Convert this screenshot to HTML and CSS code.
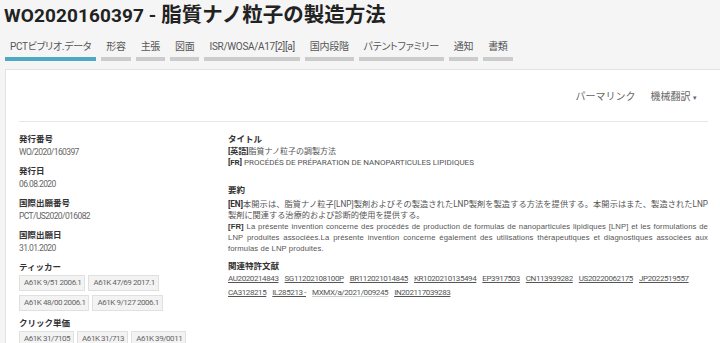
FILE: index.html
```html
<!DOCTYPE html>
<html lang="ja">
  <head>
    <meta charset="UTF-8" />
    <meta name="viewport" content="width=device-width, initial-scale=1.0" />
    <title>WO2020160397 - 脂質ナノ粒子の製造方法</title>
    <link rel="stylesheet" href="styles.css">
  </head>
  <body>
    <h1><span class="pub-no">WO2020160397 - </span>脂質ナノ粒子の製造方法</h1>

    <div class="tabs">
      <span class="tab active">PCTビブリオ.データ</span>
      <span class="tab">形容</span>
      <span class="tab">主張</span>
      <span class="tab">図面</span>
      <span class="tab">ISR/WOSA/A17[2][a]</span>
      <span class="tab">国内段階</span>
      <span class="tab">パテントファミリー</span>
      <span class="tab">通知</span>
      <span class="tab">書類</span>
    </div>

    <div class="panel">
      <div class="toolbar">
        <span>パーマリンク</span>
        <span>機械翻訳 <span class="caret">▾</span></span>
      </div>

      <div class="content">
        <div class="left-col">
          <div class="field">
            <div class="label">発行番号</div>
            <div class="value">WO/2020/160397</div>
          </div>
          <div class="field">
            <div class="label">発行日</div>
            <div class="value">06.08.2020</div>
          </div>
          <div class="field">
            <div class="label">国際出願番号</div>
            <div class="value">PCT/US2020/016082</div>
          </div>
          <div class="field">
            <div class="label">国際出願日</div>
            <div class="value">31.01.2020</div>
          </div>
          <div class="field">
            <div class="label">ティッカー</div>
            <div class="tags">
              <span class="tag">A61K 9/51 2006.1</span>
              <span class="tag">A61K 47/69 2017.1</span>
              <span class="tag">A61K 48/00 2006.1</span>
              <span class="tag">A61K 9/127 2006.1</span>
            </div>
          </div>
          <div class="field">
            <div class="label">クリック単価</div>
            <div class="tags">
              <span class="tag">A61K 31/7105</span>
              <span class="tag">A61K 31/713</span>
              <span class="tag">A61K 39/0011</span>
            </div>
          </div>
        </div>

        <div class="right-col">
          <div class="section">
            <div class="label">タイトル</div>
            <div class="line"><b>[英語]</b>脂質ナノ粒子の調製方法</div>
            <div class="line"><b>[FR]</b> PROCÉDÉS DE PRÉPARATION DE NANOPARTICULES LIPIDIQUES</div>
          </div>

          <div class="section abstract">
            <div class="label">要約</div>
            <p class="text"><b>[EN]</b>本開示は、脂質ナノ粒子[LNP]製剤およびその製造されたLNP製剤を製造する方法を提供する。本開示はまた、製造されたLNP製剤に関連する治療的および診断的使用を提供する。</p>
            <p class="text fr"><b>[FR]</b> La présente invention concerne des procédés de production de formulas de nanoparticules lipidiques [LNP] et les formulations de LNP produites associées.La présente invention concerne également des utilisations thérapeutiques et diagnostiques associées aux formulas de LNP produites.</p>
          </div>

          <div class="section related">
            <div class="label">関連特許文献</div>
            <div class="links">
              <a href="#">AU2020214843</a>
              <a href="#">SG11202108100P</a>
              <a href="#">BR112021014845</a>
              <a href="#">KR1020210135494</a>
              <a href="#">EP3917503</a>
              <a href="#">CN113939282</a>
              <a href="#">US20220062175</a>
              <a href="#">JP2022519557</a>
              <a href="#">CA3128215</a>
              <a href="#">IL285213 -</a>
              <a href="#" class="plain">MXMX/a/2021/009245</a>
              <a href="#">IN202117039283</a>
            </div>
          </div>
        </div>
      </div>
    </div>
  </body>
</html>
```

FILE: styles.css
```css
body {
  margin: 0;
  padding: 0 0 0 4px;
  background-color: #f5f5f5;
  color: #333;
  font-family: Roboto, "Noto Sans CJK JP", sans-serif;
  overflow: hidden;
}
h1 {
  margin: 0;
  padding-top: 3px;
  font-size: 20.5px;
  line-height: 24px;
  font-weight: bold;
  color: #222;
}
.pub-no {
  font-size: 19px;
  letter-spacing: 0.1px;
}
.tabs {
  display: flex;
  gap: 5px;
  margin: 13px 0 0 1px;
}
.tab {
  padding: 0 5px 4px;
  border-bottom: 4px solid #cccccc;
  font-size: 10px;
  line-height: 12px;
  color: #555;
  font-feature-settings: "palt";
  letter-spacing: -0.3px;
}
.tab.active {
  border-bottom-color: #4fa8c4;
}
.panel {
  margin: 8px 0 0 1px;
  background-color: #fff;
  border: 1px solid #e2e2e2;
  border-right: none;
  height: 300px;
}
.toolbar {
  display: flex;
  justify-content: flex-end;
  gap: 15px;
  margin: 0 12px 0 13px;
  padding: 21px 11px 17px 0;
  border-bottom: 1px solid #e6e6e6;
  font-size: 10px;
  line-height: 12px;
  color: #666;
}
.caret {
  font-size: 7px;
}
.content {
  display: flex;
  margin: 0 12px 0 13px;
  padding-top: 11px;
}
.left-col {
  width: 209px;
  flex-shrink: 0;
}
.right-col {
  flex: 1;
}
.label {
  font-size: 8.5px;
  line-height: 13px;
  font-weight: bold;
  color: #333;
}
.field {
  margin-bottom: 6px;
}
.value {
  font-size: 8.5px;
  line-height: 13px;
  letter-spacing: -0.6px;
  color: #666;
}
.tags {
  display: flex;
  flex-wrap: wrap;
  gap: 4px 3px;
  width: 180px;
  margin-top: 1px;
}
.tag {
  padding: 0 3px 0 4px;
  border: 1px solid #e0e0e0;
  background-color: #f3f3f3;
  font-size: 8px;
  line-height: 14px;
  letter-spacing: -0.45px;
  color: #666;
}
.line {
  font-size: 8px;
  line-height: 11px;
  color: #555;
}
.line b,
.text b {
  color: #333;
}
.text b {
  display: inline-block;
  line-height: 11px;
}
.abstract {
  margin-top: 16px;
}
.text {
  margin: 0;
  font-size: 8.2px;
  line-height: 11px;
  color: #555;
  text-align: justify;
}
.abstract .label {
  margin-bottom: 2px;
}
.text.fr {
  font-family: "Liberation Sans", "Noto Sans CJK JP", sans-serif;
  font-size: 7.7px;
  letter-spacing: 0.1px;
}
.related {
  margin-top: 6px;
}
.links {
  display: flex;
  flex-wrap: wrap;
  gap: 3px 6px;
}
.links a {
  font-size: 8px;
  line-height: 11px;
  letter-spacing: -0.4px;
  color: #555;
}
.links a.plain {
  text-decoration-color: #ccc;
}
```
